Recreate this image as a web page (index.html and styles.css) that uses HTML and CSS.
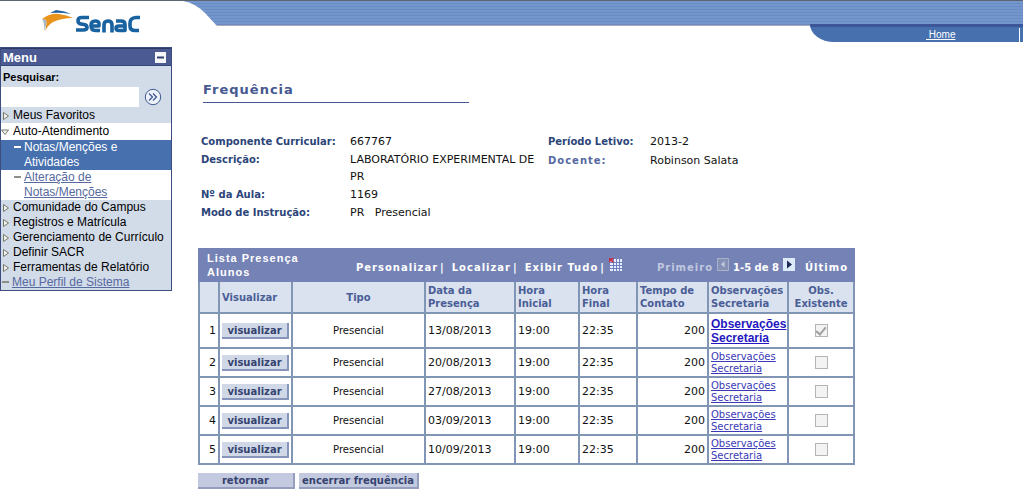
FILE: index.html
```html
<!DOCTYPE html>
<html lang="pt-BR">
<head>
<meta charset="utf-8">
<title>Frequência</title>
<link rel="stylesheet" href="styles.css">
</head>
<body>
<header class="top">
  <div class="brand">
    <svg class="logo" viewBox="0 0 100 28" width="100" height="28" role="img" aria-label="Senac">
      <path d="M8 4 L14 1 Q23 2 29 5 Q18 3 8 4Z" fill="#1f5fa0"/>
      <path d="M0 10 Q8 4 17 5 Q25 6 31 9 Q20 9 11 13 Q6 16 3 22 Q5 15 4 11 Z" fill="#e8941c"/>
      <path d="M0 10 L4 11 Q5 16 2 22 Q3 14 0 10Z" fill="#a9b7c4"/>
      <g fill="none" stroke="#17629f" stroke-width="3.6" stroke-linejoin="round">
        <path d="M47 8.500 H40 Q36 8.500 36 11.500 Q36 14.500 39 15 L42 15.500 Q45 16 45 18.500 Q45 21 41 21 H34"/>
        <path d="M49 17 H57 Q58 12 53.500 12 Q49 12 49 16.500 Q49 21.500 53.500 21.500 H58"/>
        <path d="M62 23.500 V16 Q62 12 66 12 Q70 12 70 16 V23.500"/>
        <path d="M74 12 H79 Q83 12 83 15.500 V21.500 H77 Q74 21.500 74 19 Q74 17 77 17 H83"/>
        <path d="M98 8.500 H94 Q88 9 88 14 V17 Q88 21.500 93 21.500 L97 21.500"/>
      </g>
    </svg>
  </div>
  <div class="stripes">
    <svg class="curve" viewBox="0 0 36 25" width="36" height="25" aria-hidden="true"><path d="M0 0 Q12 2 22 12 L34 25 H0Z" fill="#fff"/></svg>
  </div>
  <nav class="tab"><a href="#">&nbsp;Home</a></nav>
</header>
<div class="page">
  <aside class="menu">
    <div class="menu-title">Menu
      <button class="collapse" aria-label="Recolher menu"><svg width="11" height="11" viewBox="0 0 11 11"><path d="M2 5.5H9" stroke="#30406e" stroke-width="2"/></svg></button>
    </div>
    <form class="search">
      <label for="q">Pesquisar:</label>
      <div class="search-row">
        <input id="q" type="text">
        <button class="go" type="button" aria-label="Pesquisar"><svg width="18" height="18" viewBox="0 0 18 18" fill="none" stroke="#405a91"><circle cx="9" cy="9" r="7.7" fill="#eef3fa"/><path d="M5 5.5L8.500 9L5 12.500M9 5.500L12.500 9L9 12.500" stroke-width="1.300"/></svg></button>
      </div>
    </form>
    <ul class="items">
      <li><svg class="mark" viewBox="0 0 8 10"><path d="M1.500 1.500L6.500 5L1.500 8.500Z"/></svg><span>Meus Favoritos</span></li>
      <li class="open"><svg class="mark" viewBox="0 0 8 10"><path d="M0.500 3L7.500 3L4 7.500Z"/></svg><span>Auto-Atendimento</span></li>
      <li class="sub active"><i class="dash"></i><span>Notas/Menções e Atividades</span></li>
      <li class="sub"><i class="dash"></i><a href="#">Alteração de Notas/Menções</a></li>
      <li><svg class="mark" viewBox="0 0 8 10"><path d="M1.500 1.500L6.500 5L1.500 8.500Z"/></svg><span>Comunidade do Campus</span></li>
      <li><svg class="mark" viewBox="0 0 8 10"><path d="M1.500 1.500L6.500 5L1.500 8.500Z"/></svg><span>Registros e Matrícula</span></li>
      <li><svg class="mark" viewBox="0 0 8 10"><path d="M1.500 1.500L6.500 5L1.500 8.500Z"/></svg><span>Gerenciamento de Currículo</span></li>
      <li><svg class="mark" viewBox="0 0 8 10"><path d="M1.500 1.500L6.500 5L1.500 8.500Z"/></svg><span>Definir SACR</span></li>
      <li><svg class="mark" viewBox="0 0 8 10"><path d="M1.500 1.500L6.500 5L1.500 8.500Z"/></svg><span>Ferramentas de Relatório</span></li>
      <li><i class="dash"></i><a href="#">Meu Perfil de Sistema</a></li>
    </ul>
  </aside>
  <main class="content">
    <h1>Frequência</h1>
    <div class="info">
      <dl>
        <dt>Componente Curricular:</dt><dd>667767</dd>
        <dt>Descrição:</dt><dd>LABORATÓRIO EXPERIMENTAL DE PR</dd>
        <dt>Nº da Aula:</dt><dd>1169</dd>
        <dt>Modo de Instrução:</dt><dd>PR &nbsp; Presencial</dd>
      </dl>
      <dl class="right">
        <dt>Período Letivo:</dt><dd>2013-2</dd>
        <dt class="wide">Docente:</dt><dd>Robinson Salata</dd>
      </dl>
    </div>
    <table class="grid">
      <colgroup><col class="c1"><col class="c2"><col class="c3"><col class="c4"><col class="c5"><col class="c6"><col class="c7"><col class="c8"><col class="c9"></colgroup>
      <thead>
        <tr class="bar"><td colspan="9"><div class="bar-in">
          <strong class="list-name">Lista Presença Alunos</strong>
          <div class="tools"><a href="#">Personalizar</a><span>|</span><a href="#">Localizar</a><span>|</span><a href="#">Exibir Tudo</a><span>|</span>
            <svg width="13" height="13" viewBox="0 0 13 13" aria-hidden="true"><path d="M1 1H13V13H1Z" fill="#e8edff"/><path d="M1 4.500H13M1 7.500H13M1 10.500H13M4.500 1V13M7.500 1V13M10.500 1V13" stroke="#6f7fc4"/><path d="M0 0H5L3.500 2L5 4L3.500 5L2 3L0 5Z" fill="#c4304c"/></svg></div>
          <div class="pager"><span class="off">Primeiro</span>
            <svg width="12" height="13" viewBox="0 0 12 13" aria-hidden="true"><path d="M.5.500H11.500V12.500H.5Z" fill="#8490b4" stroke="#aab1cb"/><path d="M7.500 3V9.500L4 6.250Z" fill="#c5cbe0"/></svg>
            <span class="count">1-5 de 8</span>
            <svg width="12" height="13" viewBox="0 0 12 13" aria-hidden="true"><path d="M0 0H12V13H0Z" fill="#dceafa"/><path d="M4 2.500V10.500L9 6.500Z" fill="#1d2b55"/></svg>
            <a href="#">Último</a></div>
        </div></td></tr>
        <tr class="heads"><th></th><th>Visualizar</th><th class="mid">Tipo</th><th>Data da Presença</th><th>Hora Inicial</th><th>Hora Final</th><th>Tempo de Contato</th><th>Observações Secretaria</th><th class="mid">Obs. Existente</th></tr>
      </thead>
      <tbody>
        <tr class="first"><td class="num">1</td><td><button class="view">visualizar</button></td><td class="mid">Presencial</td><td class="n">13/08/2013</td><td class="n">19:00</td><td class="n">22:35</td><td class="num">200</td><td><a href="#">Observações Secretaria</a></td><td class="mid"><input type="checkbox" aria-label="Obs. existente 1" checked disabled></td></tr>
        <tr><td class="num">2</td><td><button class="view">visualizar</button></td><td class="mid">Presencial</td><td class="n">20/08/2013</td><td class="n">19:00</td><td class="n">22:35</td><td class="num">200</td><td><a href="#">Observações Secretaria</a></td><td class="mid"><input type="checkbox" aria-label="Obs. existente 2" disabled></td></tr>
        <tr><td class="num">3</td><td><button class="view">visualizar</button></td><td class="mid">Presencial</td><td class="n">27/08/2013</td><td class="n">19:00</td><td class="n">22:35</td><td class="num">200</td><td><a href="#">Observações Secretaria</a></td><td class="mid"><input type="checkbox" aria-label="Obs. existente 3" disabled></td></tr>
        <tr><td class="num">4</td><td><button class="view">visualizar</button></td><td class="mid">Presencial</td><td class="n">03/09/2013</td><td class="n">19:00</td><td class="n">22:35</td><td class="num">200</td><td><a href="#">Observações Secretaria</a></td><td class="mid"><input type="checkbox" aria-label="Obs. existente 4" disabled></td></tr>
        <tr><td class="num">5</td><td><button class="view">visualizar</button></td><td class="mid">Presencial</td><td class="n">10/09/2013</td><td class="n">19:00</td><td class="n">22:35</td><td class="num">200</td><td><a href="#">Observações Secretaria</a></td><td class="mid"><input type="checkbox" aria-label="Obs. existente 5" disabled></td></tr>
      </tbody>
    </table>
    <div class="actions"><button class="back">retornar</button><button class="close">encerrar frequência</button></div>
  </main>
</div>
</body>
</html>
```

FILE: styles.css
```css
* { box-sizing: border-box; }
body { margin: 0; background: #fff; color: #111; font: 10px/12px Verdana, "DejaVu Sans", sans-serif; }
button { font: inherit; padding: 0; margin: 0; cursor: pointer; }
svg { display: block; flex: none; }

.top { display: grid; grid-template-columns: 183px 1fr; grid-template-rows: 25px 17px; border-top: 1px solid #5c6470; }
.brand { grid-row: 1 / 3; padding: 8px 0 0 42px; }
.stripes { background: linear-gradient(#a9a9bb, #a9a9bb) bottom / 100% 1px no-repeat, repeating-linear-gradient(#7397cc 0 2px, #6b8cc3 2px 3px); }
.tab { grid-column: 2; justify-self: end; width: 213px; margin-top: -2px; height: 18px; background: #4670ae; border-top: 3px solid #3c5596; border-bottom-left-radius: 24px 18px; padding-left: 116px; display: flex; align-items: center; position: relative; font: 10px/12px "Liberation Sans", Arial, sans-serif; }
.tab a { color: #fff; }
.tab::after { content: ""; width: 1px; height: 14px; background: #fff; margin: 0 3px 0 auto; }

.page { display: flex; align-items: flex-start; padding-top: 4px; }
.menu { width: 172px; flex: none; border: 1px solid #3d4d80; background: #d2dbe8; font: 12px/15px "Liberation Sans", Arial, sans-serif; color: #000; }
.menu-title { display: flex; justify-content: space-between; align-items: center; height: 18px; padding: 0 5px 0 2px; background: #4b5a93; color: #fff; font-size: 13px; font-weight: bold; border-top: 1px solid #2c3967; border-bottom: 1px solid #35457a; }
.collapse { border: 0; background: #f4f6fa; width: 11px; height: 11px; }
.search label { display: block; font-size: 11px; font-weight: bold; padding: 4px 2px 1px; }
.search-row { display: flex; align-items: center; gap: 5px; height: 22px; }
.search input { width: 138px; height: 20px; border: 0; background: #fff; padding: 0 2px; }
.go { border: 0; background: none; }
.items { list-style: none; margin: 0; padding: 0; }
.items li { display: flex; gap: 3px; padding-left: 1px; }
.items .open, .items .sub { background: #fff; }
.items .open { padding: 1px 0; gap: 4px; }
.items .sub { padding: 0 40px 0 13px; }
.items .active { background: #4670ae; color: #fff; }
.items a { color: #5669a0; }
.mark { width: 8px; height: 10px; margin-top: 3px; fill: #f0f2ee; stroke: #77796a; }
.dash { width: 7px; height: 2px; margin-top: 6px; background: #8e8f88; flex: none; }
.active .dash { background: #fff; }

.content { flex: 1; min-width: 0; padding: 34px 26px 0; }
h1 { margin: 0 0 30px 5px; width: 266px; color: #46588f; font-size: 13px; line-height: 18px; letter-spacing: 1px; border-bottom: 1px solid #46588f; padding-bottom: 3px; }
.info { display: flex; align-items: flex-start; height: 115px; padding-left: 3px; }
dl { display: grid; grid-template-columns: 149px 190px; margin: 0; row-gap: 1px; line-height: 17px; }
dl.right { grid-template-columns: 102px 150px; margin-left: 8px; row-gap: 2px; }
dt { font-weight: bold; color: #2c4579; }
dt.wide { color: #5568a0; letter-spacing: 1px; }
dd { margin: 0; font-size: 11px; }

.grid { width: 100%; max-width: 656px; table-layout: fixed; border-collapse: collapse; }
.grid td, .grid th { border: 2px solid #8196b4; padding: 0 2px; text-align: left; }
.c1 { width: 20px; } .c2 { width: 73px; } .c3 { width: 133px; } .c4 { width: 90px; } .c5 { width: 64px; }
.c6 { width: 58px; } .c7 { width: 71px; } .c8 { width: 80px; } .c9 { width: 66px; }
.grid .bar td { background: #7582b5; border-color: #7582b5; color: #fff; font-weight: bold; letter-spacing: 1px; padding: 0; }
.bar-in { display: grid; grid-template-columns: 149px 1fr auto; align-items: center; height: 30px; padding: 0 5px 0 7px; }
.list-name { width: 110px; font: bold 11px/14px "Liberation Sans", Arial, sans-serif; }
.bar a { color: #fff; text-decoration: none; }
.tools, .pager { display: flex; align-items: center; padding-top: 6px; }
.tools span { margin: 0 7px 0 2px; }
.tools svg, .pager svg { margin-bottom: 8px; }
.tools svg { margin-left: -3px; }
.pager { gap: 4px; }
.count { letter-spacing: 0; }
.pager a { margin-left: 6px; }
.off { color: #c0c7e0; }
.grid th { height: 32px; background: #d9e2ee; color: #4a5d96; line-height: 13px; }
.grid .mid { text-align: center; }
.grid .num { text-align: right; font-size: 11px; }
.n { font-size: 11px; }
tbody td { height: 29px; }
.first td { height: 35px; }
tbody a { color: #3a3ab8; display: block; }
.first a { font: bold 12px/14px "Liberation Sans", Arial, sans-serif; color: #2418c0; }
.view { width: 67px; height: 16px; display: block; background: #d0d8e8; border: 0; border-right: 2px solid #8794bb; border-bottom: 2px solid #8794bb; color: #34436f; font-weight: bold; padding-top: 2px; }
input[type=checkbox] { appearance: none; display: block; width: 13px; height: 13px; margin: 0 auto; border: 1px solid #b4b4b4; background: #f3f3f3; }
input[type=checkbox]:checked::after { content: ""; display: block; width: 4px; height: 8px; margin: 0 auto; border: solid #a0a0a0; border-width: 0 2px 2px 0; transform: rotate(40deg); }
.actions { display: flex; gap: 4px; margin-top: 8px; }
.actions button { height: 16px; width: 97px; background: #c3c9de; border: 0; border-right: 2px solid #949fc0; border-bottom: 2px solid #949fc0; color: #34436f; font-weight: bold; line-height: 12px; padding-top: 1px; }
.actions .close { width: 120px; }
```
